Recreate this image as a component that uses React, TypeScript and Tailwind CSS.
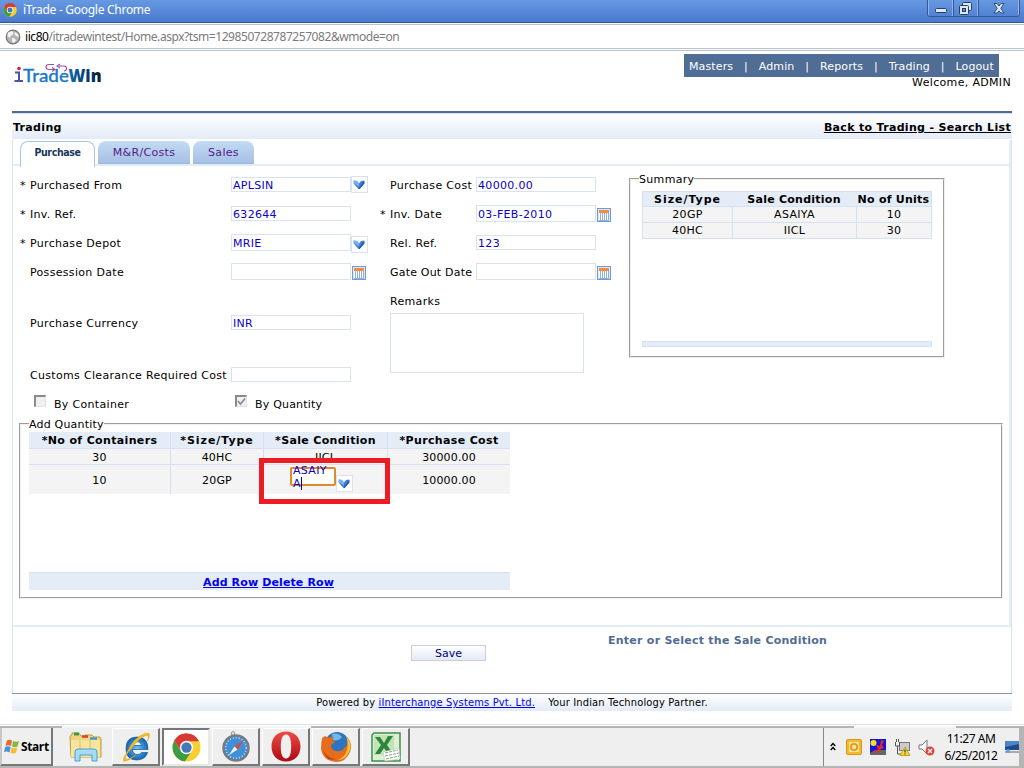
import React from "react";

const verdana = "font-['DejaVu_Sans',sans-serif]";

function ChromeLogo({ size }: { size: number }) {
  return (
    <svg width={size} height={size} viewBox="0 0 28 28" className="shrink-0">
      <circle cx="14" cy="14" r="13.5" fill="#f8cf30" />
      <path d="M2.3 7.3A13.5 13.5 0 0 1 25.7 7.3L14 8z" fill="#d63a31" />
      <path d="M2.3 7.3A13.5 13.5 0 0 0 12.3 27.4L19 17.5 9 18z" fill="#3f9c46" />
      <path d="M2.3 7.3L8.5 17 14 8H26A13.5 13.5 0 0 0 2.3 7.3z" fill="#d63a31" />
      <circle cx="14" cy="14" r="6.4" fill="#fff" />
      <circle cx="14" cy="14" r="5" fill="#4678b8" />
    </svg>
  );
}

function TitleBar() {
  return (
    <div className="flex h-[23px] shrink-0 items-start border-b border-[#34588f] bg-linear-to-b from-[#6799e2] to-[#4a79cd] pl-[3px] pr-[4px]">
      <div className="pt-[3px]"><ChromeLogo size={14} /></div>
      <span className="ml-[6px] pt-px font-['Noto_Sans',sans-serif] text-[12px] leading-[18px] tracking-[-0.28px] text-white">iTrade - Google Chrome</span>
      <div className="ml-auto flex h-[17px] w-[93px] overflow-hidden rounded-b-[3px] border border-t-0 border-[#365791]">
        <div className="flex w-[25px] items-center justify-center border-x border-[#8fb3ea] pt-[3px]">
          <svg width="12" height="6"><rect x=".5" y="1.5" width="11" height="4" rx="1" fill="#dce7f8" stroke="#263e68" /></svg>
        </div>
        <div className="flex w-[25px] items-center justify-center border-x border-l-[#365791] border-r-[#8fb3ea]">
          <svg width="14" height="13" fill="#dce7f8" stroke="#263e68"><rect x="3.5" y=".5" width="9" height="8" rx="1" /><rect x=".5" y="3.5" width="9" height="9" rx="1" /><rect x="3.5" y="6.5" width="3" height="3" fill="#5b8ad8" /></svg>
        </div>
        <div className="flex flex-1 items-center justify-center border-x border-l-[#365791] border-r-[#8fb3ea]">
          <svg width="12" height="11" viewBox="0 0 12 11"><path d="M1 .5h3l2 2.5L8 .5h3L7.8 5.3 11 10H8L6 7.8 4 10H1l3.2-4.7z" fill="#dce7f8" stroke="#263e68" strokeWidth=".9" /></svg>
        </div>
      </div>
    </div>
  );
}

function AddressBar() {
  return (
    <div className="flex h-[28px] shrink-0 flex-col pt-px">
      <div className="flex h-[25px] items-center border-y border-[#b9c1c9] pl-[5px]">
        <svg width="16" height="16" viewBox="0 0 16 16">
          <circle cx="8" cy="8" r="6.8" fill="#b4b4b4" stroke="#777" strokeWidth="1.2" />
          <path d="M3 3.5l4-1.5 1.5 2-1 2-2 1L5 9 2.500 7zM10 3l3 2 .5 3-2.500-1-1.500-2zM7 9l3 .5 1 2-2.500 2.500-1.500-1.500z" fill="#f3f3f3" />
        </svg>
        <span className="ml-[4px] whitespace-pre font-['Noto_Sans',sans-serif] text-[12px] leading-[18px] tracking-[-0.44px] text-[#7b7b7b]"><span className="text-black">iic80</span>/itradewintest/Home.aspx?tsm=129850728787257082&amp;wmode=on</span>
      </div>
      <div className="h-[2px] border-b border-[#b9c1c9]" />
    </div>
  );
}

function Logo() {
  return (
    <svg width="96" height="30" viewBox="0 0 96 30">
      <defs>
        <linearGradient id="win" x1="0" x2="1"><stop offset="0" stopColor="#0e68b4" /><stop offset="1" stopColor="#041c33" /></linearGradient>
      </defs>
      <path d="M1 11.500h4v8M.500 20h8.500" fill="none" stroke="#4b55a8" strokeWidth="2" />
      <circle cx="5" cy="7.500" r="1.800" fill="#e02030" />
      <text x="9" y="21" fontFamily="Lato" fontSize="18" letterSpacing="0" fontWeight="500" fill="#1a79c6" stroke="#1a79c6" strokeWidth=".3" textLength="46" lengthAdjust="spacingAndGlyphs">Trade</text>
      <text x="54.500" y="21" fontFamily="Open Sans" fontSize="18" letterSpacing="0" fontWeight="800" fill="url(#win)" textLength="33" lengthAdjust="spacingAndGlyphs">Win</text>
      <path d="M40 3.500h-5q-3 0-3 2.500t3 2.500h5m-2-2l3 2-3 2M45 5h5q2.500 0 2.500 2.500T50 10M46 3l-3 2 3 2" fill="none" stroke="#9a4fa8" strokeWidth="1.100" />
    </svg>
  );
}

function Header() {
  const items = ["Masters", "Admin", "Reports", "Trading", "Logout"];
  return (
    <div className="flex h-[60px] shrink-0 justify-between pl-[14px] pr-[12px] pt-[3px]">
      <div className="pt-[7px]"><Logo /></div>
      <div className="flex w-[328px] flex-col items-end">
        <div className="mr-[13px] flex h-[23px] w-[315px] items-center justify-between bg-[#4f6d95] pl-[5px] pr-[5px] pt-[2px] text-[11px] tracking-[0.12px] text-white">
          {items.map((t, i) => (
            <React.Fragment key={t}>
              {i > 0 && <span className="px-[3px]">|</span>}
              <span>{t}</span>
            </React.Fragment>
          ))}
        </div>
        <span className="-mt-px mr-px text-[11px] leading-[14px] tracking-[0.33px]">Welcome, ADMIN</span>
      </div>
    </div>
  );
}

function Tabs() {
  return (
    <div className="flex h-[25px] items-start pl-[7px] pt-px">
      <div className="z-10 mr-[3px] h-[26px] w-[75px] shrink-0 rounded-t-[8px] border border-b-0 border-[#a9c8e8] bg-white pt-[3px] text-center font-['DejaVu_Sans_Condensed','DejaVu_Sans',sans-serif] text-[10.5px] font-bold leading-[14px] tracking-[-0.35px] text-[#16365c]">Purchase</div>
      <div className="mr-[3px] h-[23px] w-[92px] rounded-t-[8px] border-b border-[#94bddd] bg-linear-to-b from-[#c2dcf4] to-[#a6bfe4] pt-[4px] text-center text-[11px] leading-[15px] text-[#551a8b]">M&amp;R/Costs</div>
      <div className="h-[23px] w-[61px] rounded-t-[8px] border-b border-[#94bddd] bg-linear-to-b from-[#c2dcf4] to-[#a6bfe4] pt-[4px] text-center text-[11px] leading-[15px] text-[#551a8b]">Sales</div>
    </div>
  );
}

function Chevron() {
  return (
    <div className="flex h-[17px] w-[17px] shrink-0 items-center justify-center border border-[#d8e3f0] bg-white pr-px">
      <svg width="12" height="11" viewBox="0 0 12 11">
        <path d="M.7 1.500L4 2l2 2.500L8 2l3.300-.5v3L6.600 10H5.400L.7 4.500z" fill="#3f82d8" />
        <path d="M.7 1.500L4 2l2 2.500v3L.7 4z" fill="#7ab2ee" />
        <path d="M11.300 1.800v2.700L6.600 10H6V8.500z" fill="#2258ae" />
      </svg>
    </div>
  );
}

function Calendar() {
  return (
    <svg width="14" height="14" viewBox="0 0 14 14" className="shrink-0">
      <rect x=".5" y=".5" width="13" height="13" fill="#dce9f8" stroke="#6f9bcf" />
      <rect x="2" y="2" width="10" height="3" fill="#f58a42" />
      <path d="M2.500 5v7M4.500 5v7M6.500 5v7M8.500 5v7M10.500 5v7" stroke="#fff" />
      <path d="M3.500 5v7M5.500 5v7M7.500 5v7M9.500 5v7M11.500 5v7M2 12.500h10" stroke="#8db0dc" />
    </svg>
  );
}

type FieldProps = { label: string; req?: boolean; value?: string; tall?: boolean; icon?: "drop" | "cal"; low?: boolean; labelClass: string };

function Field({ label, req, value, tall, icon, low, labelClass }: FieldProps) {
  return (
    <div className="flex h-[29px] shrink-0 items-center">
      <span className="w-[10px] shrink-0">{req ? "*" : ""}</span>
      <span className={"shrink-0 whitespace-nowrap " + labelClass}>{label}</span>
      <div className={"mb-[2px] flex w-[120px] shrink-0 items-center border border-[#d8e3f0] pl-px pt-[3px] text-[#0a00c8] " + (tall ? "h-[17px]" : "h-[15px]")}>{value}</div>
      {icon === "drop" && <div className={low ? "pt-[2px]" : "pb-[2px]"}><Chevron /></div>}
      {icon === "cal" && <div className="pl-px pt-[1px]"><Calendar /></div>}
    </div>
  );
}

function Check({ on }: { on?: boolean }) {
  return (
    <div className="mb-[5px] flex h-[12px] w-[12px] shrink-0 items-center justify-center border-2 border-b border-r border-[#8a8a8a] border-b-[#e2e2e2] border-r-[#e2e2e2] bg-[#f0f0f0]">
      {on && <svg width="9" height="9" viewBox="0 0 9 9"><path d="M1 4l2.500 3L8 1.500" fill="none" stroke="#8f8f8f" strokeWidth="1.800" /></svg>}
    </div>
  );
}

function SummaryBox() {
  const rows = [["20GP", "ASAIYA", "10"], ["40HC", "IICL", "30"]];
  return (
    <fieldset className="h-[187px] w-[316px] border-2 border-[#f0f0f0] px-[11px] [border-style:groove]">
      <legend className="-ml-[3px] h-[15px] leading-[17px]">Summary</legend>
      <div className="mt-[5px] h-[150px] w-[290px]">
        <div className="grid grid-cols-[89px_124px_75px] border border-[#d5e1ef]">
          {["Size/Type", "Sale Condition", "No of Units"].map((h, i) => (
            <div key={h} className={"h-[14px] whitespace-nowrap bg-[#e4ecf7] text-center font-bold leading-[15px] " + (i ? "tracking-[0.25px]" : "tracking-[0.95px]")}>{h}</div>
          ))}
          {rows.flat().map((c, i) => (
            <div key={i} className={"h-[16px] border-t border-[#d5e1ef] bg-[#f4f4f4] text-center leading-[16px] " + (i % 3 ? "border-l" : "")}>{c}</div>
          ))}
        </div>
      </div>
      <div className="h-[6px] w-[290px] border border-[#d5e1ef] bg-[#e4ecf7]" />
    </fieldset>
  );
}

function QuantityBox() {
  const heads = ["*No of Containers", "*Size/Type", "*Sale Condition", "*Purchase Cost"];
  return (
    <fieldset className="-mt-px ml-[6px] h-[183px] w-[984px] shrink-0 border-2 border-[#f0f0f0] pl-[8px] [border-style:groove]">
      <legend className="h-[15px] leading-[17px] tracking-[0.2px]">Add Quantity</legend>
      <div className="relative h-[141px] w-[481px]">
        <div className="grid grid-cols-[141px_93px_124px_123px] pt-[1px]">
          {heads.map((h, i) => (
            <div key={h} className={"h-[16px] whitespace-nowrap border-[#d5e1ef] bg-[#e4ecf7] text-center font-bold leading-[18px] " + (i ? "border-l " : "") + (i === 1 ? "tracking-[0.95px]" : "tracking-[0.35px]")}>{h}</div>
          ))}
          {["30", "40HC", "IICL", "30000.00"].map((c, i) => (
            <div key={c} className={"h-[16px] border-t border-[#d5e1ef] bg-[#f4f4f4] text-center leading-[17px] tracking-[0.15px] " + (i ? "border-l" : "")}>{c}</div>
          ))}
          {["10", "20GP", "", "10000.00"].map((c, i) => (
            <div key={c} className={"h-[30px] border-t border-[#d5e1ef] bg-[#f4f4f4] text-center leading-[31px] tracking-[0.15px] " + (i ? "border-l" : "")}>{c}</div>
          ))}
        </div>
        <div className="absolute left-[230px] top-[27px] h-[46px] w-[131px] border-[5px] border-[#ed1c24]">
          <div className="absolute left-[26px] top-[4px] h-[19px] w-[46px] rounded-[2px] border-2 border-[#e08a2c] bg-white" />
          <div className="absolute left-[29px] top-[1px] w-[45px] leading-[13px] text-[#0a00c8]">ASAIY<br /><span className="border-r border-[#0a00a0]">A</span></div>
          <div className="absolute left-[72px] top-[12px]"><Chevron /></div>
        </div>
      </div>
      <div className="flex h-[18px] w-[481px] justify-center gap-[4px] border-t border-[#d5e1ef] bg-[#e4ecf7] pr-[2px] font-bold leading-[19px] tracking-[0.12px] text-[#0000ee]">
        <span className="underline">Add Row</span>
        <span className="underline">Delete Row</span>
      </div>
    </fieldset>
  );
}

function Form() {
  return (
    <div className="flex h-[251px] shrink-0 pl-[7px] pt-[5px]">
      <div className="flex w-[360px] flex-col">
        <Field req label="Purchased From" value="APLSIN" icon="drop" labelClass="w-[201px]" />
        <Field req label="Inv. Ref." value="632644" labelClass="w-[201px]" />
        <Field req label="Purchase Depot" value="MRIE" tall icon="drop" low labelClass="w-[201px]" />
        <Field label="Possession Date" tall icon="cal" labelClass="w-[201px]" />
        <div className="h-[22px] shrink-0" />
        <Field label="Purchase Currency" value="INR" labelClass="w-[201px]" />
        <div className="h-[23px] shrink-0" />
        <Field label="Customs Clearance Required Cost" labelClass="w-[201px]" />
        <div className="flex h-[27px] shrink-0 items-center pl-[14px]">
          <Check /><span className="ml-[8px] w-[181px] pt-[2px]">By Container</span>
          <Check on /><span className="ml-[8px] pt-[2px] tracking-[0.2px]">By Quantity</span>
        </div>
      </div>
      <div className="flex w-[249px] flex-col">
        <Field label="Purchase Cost" value="40000.00" labelClass="w-[86px]" />
        <Field req label="Inv. Date" value="03-FEB-2010" tall icon="cal" labelClass="w-[86px]" />
        <Field label="Rel. Ref." value="123" labelClass="w-[86px]" />
        <Field label="Gate Out Date" tall icon="cal" labelClass="w-[86px] tracking-[0.2px]" />
        <div className="h-[26px] pl-[10px] leading-[29px]">Remarks</div>
        <div className="ml-[10px] h-[60px] w-[194px] border border-[#d8e3f0]" />
      </div>
      <SummaryBox />
    </div>
  );
}

function TaskButton({ children, active }: { children: React.ReactNode; active?: boolean }) {
  return (
    <div className={"mr-[2px] flex h-[38px] w-[48px] items-center justify-center border-b-2 border-r-2 " + (active ? "border-l-2 border-t-2 border-b-[#e8e8e8] border-l-[#777] border-r-[#e8e8e8] border-t-[#777] bg-white" : "border-l border-t border-b-[#777] border-l-white border-r-[#777] border-t-white bg-[#efefef]")}>
      {children}
    </div>
  );
}

function Taskbar() {
  return (
    <div className="flex h-[44px] shrink-0 flex-col border-t border-[#dedede] pt-px">
      <div className="flex h-[2px]">
        <div className="w-[62px] bg-[#b5b5b5]" />
        <div className="w-[249px] bg-[#f2f6fa]" />
        <div className="w-[543px] bg-[#b5b5b5]" />
        <div className="w-[102px] bg-[#f5f8fb]" />
        <div className="flex-1 bg-[#b5b5b5]" />
      </div>
      <div className="flex h-[40px] border-b-2 border-r-[5px] border-[#b5b5b5] bg-[#efefef]">
        <div className="flex h-[38px] w-[53px] items-center border-b-2 border-l-2 border-r-2 border-b-[#777] border-l-[#c8c8c8] border-r-[#777] pl-[2px]">
          <svg width="16" height="15" viewBox="0 0 16 15">
            <path d="M3 1.500Q5 0 8 1.500L7 7Q4 5.500 1.500 7z" fill="#e8682c" />
            <path d="M9 2q3 1.500 6 0l-1.500 5.500Q11 9 8 7.500z" fill="#86b83e" />
            <path d="M1.200 8Q4 6.500 6.700 8l-1.200 5.500Q3 12 0 13z" fill="#4b8edb" />
            <path d="M7.700 8.500Q10.500 10 13.200 8.500L12 14q-3 1-5.500-.3z" fill="#f3bd34" />
          </svg>
          <span className="ml-px pt-[2px] font-['Open_Sans',sans-serif] text-[12px] font-bold tracking-[-0.4px]">Start</span>
        </div>
        <div className="flex w-[59px] items-center pl-[16px]">
          <svg width="34" height="32" viewBox="0 0 34 32">
            <path d="M1 6q0-2 2-2V2h7l2 3h4V4h7l2 2h5q2 0 2 2v18H2z" fill="#efd67c" stroke="#bd9a45" />
            <path d="M5 3h5" stroke="#35a24b" strokeWidth="3" /><path d="M13 5.500h6" stroke="#d8432f" strokeWidth="2.500" /><path d="M21 7.500h7" stroke="#4b93d8" strokeWidth="2.500" />
            <path d="M2 9h29v17H2z" fill="#f7e59f" /><path d="M11 9v16M21 9v16" stroke="#d8bc66" />
            <path d="M6 30v-9q0-3 3-3h16q3 0 3 3v9h-5v-6H11v6z" fill="#a6dcf3" stroke="#4da0cc" />
          </svg>
        </div>
        <TaskButton>
          <svg width="30" height="30" viewBox="0 0 30 30">
            <defs><radialGradient id="ie"><stop offset="0" stopColor="#62c6f5" /><stop offset="1" stopColor="#1865b5" /></radialGradient></defs>
            <path fillRule="evenodd" d="M27 17.500H11.500q.5 5 4.800 5 3 0 4.200-2h6.200Q24 28 15.800 28 5 28 5 16.500T16 5t11 12.500zM11.500 13.500h9q-.5-4-4.500-4t-4.500 4z" fill="url(#ie)" stroke="#155796" strokeWidth=".7" />
            <path d="M6 20Q-1 31 5 29q4-1 10-6-8 5-10 4-2-2 5-10Q19 5 25 3.500q4-.5 1 6Q32-1 24 1.500 13 5 6 20z" fill="#f2b928" stroke="#d59b1c" strokeWidth=".4" />
          </svg>
        </TaskButton>
        <TaskButton active><ChromeLogo size={29} /></TaskButton>
        <TaskButton>
          <svg width="28" height="31" viewBox="0 0 28 31">
            <circle cx="11" cy="2.500" r="1.800" fill="none" stroke="#888" />
            <circle cx="14" cy="17" r="12.500" fill="#3f8fdb" stroke="#777b80" strokeWidth="2.500" />
            <circle cx="14" cy="17" r="10.300" fill="none" stroke="#c8def2" strokeWidth="1.500" strokeDasharray="1 2" />
            <path d="M21.500 9.500l-6 9-3-3z" fill="#e04a30" /><path d="M6.500 24.500l6-9 3 3z" fill="#f3f3f3" />
          </svg>
        </TaskButton>
        <TaskButton>
          <svg width="30" height="31" viewBox="0 0 30 31">
            <defs><linearGradient id="op" x2="0" y2="1"><stop stopColor="#f14a45" /><stop offset="1" stopColor="#a90b12" /></linearGradient></defs>
            <path fillRule="evenodd" d="M15 .5C24 .5 29.500 7 29.500 15.500S24 30.500 15 30.500.5 24 .5 15.500 6 .5 15 .5zM15 3.500C11 3.500 9.800 9 9.800 15.500S11 27.500 15 27.500s5.200-5.500 5.200-12S19 3.500 15 3.500z" fill="url(#op)" />
          </svg>
        </TaskButton>
        <TaskButton>
          <svg width="32" height="32" viewBox="0 0 32 32">
            <circle cx="17" cy="13" r="12" fill="#2f74bf" /><path d="M12 3q6-2 10 3-4 5-9 3z" fill="#72b9e8" />
            <path d="M2 7l3-2 4 2q3-2 5-1l-2 3 3 2-4 3q0 5 5 6 6 1 8-3 5-3 3-11 6 6 3 15-4 10-14 10Q3 30 1 18q0-6 1-11z" fill="#e66d1d" />
            <path d="M26 5q7 8 3 16-4 8-11 8 8-4 9-10 2-7-1-14z" fill="#f7c33a" />
            <path d="M3 18q3 9 12 10-9 3-12-10z" fill="#b93a18" />
          </svg>
        </TaskButton>
        <TaskButton>
          <svg width="30" height="30" viewBox="0 0 30 30">
            <path d="M3 1h26v28H1V3z" fill="#dcefd7" stroke="#3d9347" strokeWidth="1.500" />
            <path d="M3 3h20v20H3z" fill="#c1e3b7" />
            <path d="M4 5h5l4 6 4-7h5l-6 9 6 9h-5l-4-6-4 6H4l6-9z" fill="#2e8739" />
            <path d="M12 20l16-4 1 11-15 2z" fill="#fff" stroke="#b7c5b7" strokeWidth=".6" />
            <path d="M14 21l13-3M14 24l14-3M15 27l13-3" stroke="#829b83" strokeWidth="1" strokeDasharray="3 1" />
          </svg>
        </TaskButton>
        <div className="ml-auto flex h-[38px] w-[196px] items-center border-l border-[#888] pl-[6px]">
          <svg width="6" height="10" viewBox="0 0 6 10"><path d="M.7 4L3 1.500 5.300 4M.7 8L3 5.500 5.300 8" fill="none" stroke="#000" strokeWidth="1.300" /></svg>
          <svg className="ml-[10px]" width="16" height="16" viewBox="0 0 16 16"><rect x=".5" y=".5" width="15" height="15" rx="1.500" fill="#f5b92e" stroke="#df941d" /><rect x="3" y="3" width="10" height="10" fill="#fbe29b" /><circle cx="8" cy="8" r="3.200" fill="none" stroke="#e09b1e" strokeWidth="1.800" /></svg>
          <svg className="ml-[8px]" width="16" height="16" viewBox="0 0 16 16"><rect width="16" height="16" fill="#1616d8" /><circle cx="3.500" cy="4" r="3" fill="#f5df20" /><path d="M0 16v-2l5-3h11v5z" fill="#666" /><path d="M11 1l3 1-2 4 2 3-3 1-3 4-4-1 4-3-2-4 4 1z" fill="#e32920" /></svg>
          <svg className="ml-[8px]" width="17" height="17" viewBox="0 0 17 17"><rect x="5.500" y="3.500" width="10" height="8" fill="#ccc" stroke="#777" /><path d="M1.500 3v4h4V3M2.500 0v3M4.500 0v3M3.500 7v8h4" fill="none" stroke="#555" /><path d="M11 8l5 8.500H6z" fill="#f6d535" stroke="#b29018" strokeWidth=".8" /><path d="M11 10.500v3M11 14.500v1" stroke="#222" /></svg>
          <svg className="ml-[7px]" width="17" height="17" viewBox="0 0 17 17"><path d="M1 6h3l5-5v14l-5-5H1z" fill="#f7f7f7" stroke="#777" /><circle cx="12" cy="12" r="4.500" fill="#e24239" /><path d="M10 10l4 4M14 10l-4 4" stroke="#fff" strokeWidth="1.300" /></svg>
          <div className="ml-[5px] w-[62px] whitespace-nowrap text-center font-['Noto_Sans',sans-serif] text-[12px] leading-[17px] tracking-[-0.45px]">11:27 AM<br />6/25/2012</div>
          <svg className="ml-auto" width="14" height="14" viewBox="0 0 14 14"><path d="M0 1h14v9H0z" fill="#1d4c8c" /><path d="M0 1h14v3L0 7z" fill="#4b86c8" /><path d="M0 11h14v2H0z" fill="#aaa" /><circle cx="3" cy="11" r="2" fill="#5fa3e6" /></svg>
        </div>
      </div>
    </div>
  );
}

export default function App() {
  return (
    <div className={"flex h-[768px] w-[1024px] flex-col overflow-hidden bg-white text-[11px] leading-[14px] tracking-[0.32px] text-black " + verdana}>
      <TitleBar />
      <AddressBar />
      <Header />
      <div className="ml-[12px] flex w-[1000px] shrink-0 flex-col">
        <div className="h-[2px] bg-[#4f6d95]" />
        <div className="flex h-[26px] items-center justify-between border-t border-[#d5e1ef] bg-linear-to-b from-white to-[#e3ebf7] pl-px pr-px pt-[3px] font-bold">
          <span>Trading</span>
          <span className="underline">Back to Trading - Search List</span>
        </div>
        <div className="mt-px flex h-[553px] flex-col border-x border-[#d8e3f0]">
          <div className="flex h-[487px] flex-col border-b-2 border-r-2 border-[#e3edf8]">
            <Tabs />
            <div className="-mt-[1px] h-[2px] shrink-0 bg-[#e3edf8]" />
            <Form />
            <QuantityBox />
          </div>
          <div className="flex h-[66px] items-start">
            <div className="ml-[398px] mt-[18px] flex h-[16px] w-[75px] items-center justify-center border border-[#cbcfd6] bg-linear-to-b from-white to-[#e2eaf6] pt-[2px] tracking-normal text-[#000080]">Save</div>
            <span className="ml-[122px] mt-[7px] text-[11px] font-bold tracking-[0.25px] text-[#4f6d95]">Enter or Select the Sale Condition</span>
          </div>
        </div>
        <div className="flex h-[18px] justify-center whitespace-pre border-t border-[#8b93a5] bg-linear-to-b from-white to-[#e3ebf7] font-['DejaVu_Sans_Condensed','DejaVu_Sans',sans-serif] text-[11px] leading-[17px] tracking-[0.17px]">Powered by <span className="text-[#0000ee] underline">iInterchange Systems Pvt. Ltd.</span>    Your Indian Technology Partner.</div>
      </div>
      <div className="flex-1" />
      <Taskbar />
    </div>
  );
}
